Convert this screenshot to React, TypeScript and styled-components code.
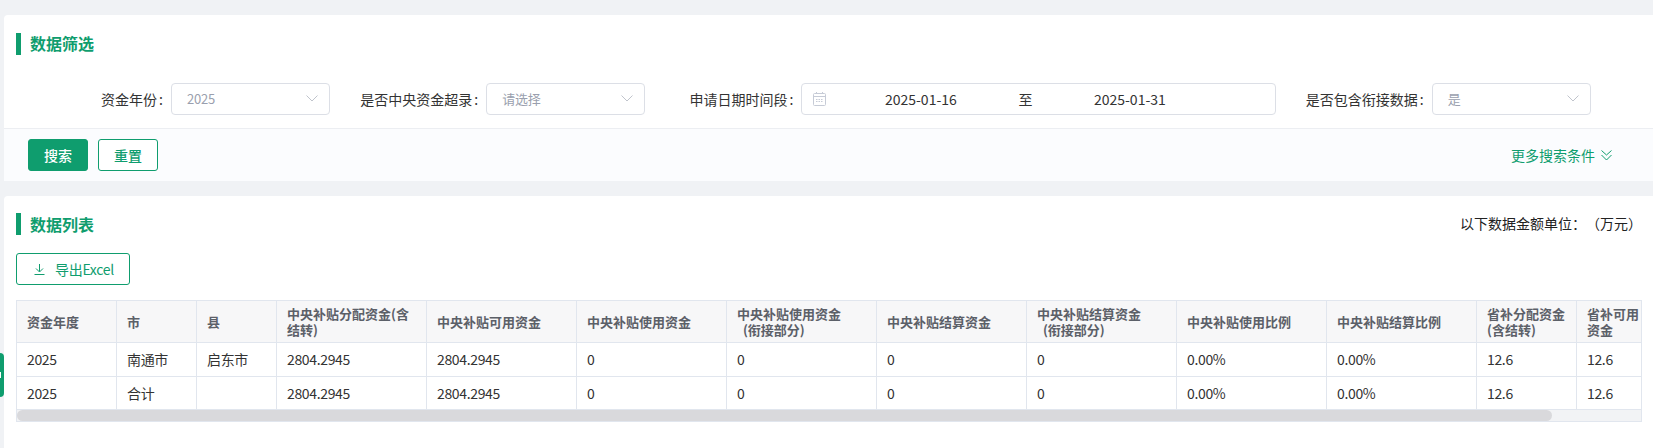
import React from 'react'
import styled, { createGlobalStyle } from 'styled-components'

const GREEN = '#0f9d6e'
const LINE = '#e1e6ee'

const GlobalStyle = createGlobalStyle`
  html, body {
    margin: 0;
    padding: 0;
    background: #f0f2f5;
    overflow: hidden;
  }
  * {
    box-sizing: border-box;
  }
  body {
    font-family: 'Noto Sans CJK SC', 'Noto Sans', sans-serif;
    font-size: 14px;
    color: #333;
  }
`

const Page = styled.div`
  position: relative;
  height: 448px;
  padding: 15px 0 0 4px;
  display: flex;
  flex-direction: column;
  gap: 15px;
  overflow: hidden;
`

const Card = styled.section<{ $grow?: boolean }>`
  background: #fff;
  border-radius: 4px 0 0 0;
  flex: ${(p) => (p.$grow ? 1 : 'none')};
`

const CardHead = styled.div`
  display: flex;
  align-items: center;
  justify-content: space-between;
  height: 22px;
  margin: 18px 11px 0 12px;
`

const ListHead = styled(CardHead)`
  margin-top: 17px;
`

const Title = styled.h2`
  margin: 0;
  padding-left: 9px;
  height: 22px;
  line-height: 21px;
  border-left: 5px solid ${GREEN};
  color: ${GREEN};
  font-size: 16px;
  font-weight: 700;
`

const ListTitle = styled(Title)`
  line-height: 23px;
`

const UnitNote = styled.div`
  padding-bottom: 2px;
  color: #222;
  font-size: 14px;
  line-height: 20px;
  text-spacing-trim: space-all;
`

const FilterGrid = styled.div`
  display: grid;
  grid-template-columns: repeat(5, 315.2px);
  margin-top: 28px;
  padding: 0 0 13px 11px;
`

const Field = styled.label<{ $span?: number }>`
  display: grid;
  grid-template-columns: 148px 1fr;
  column-gap: 8px;
  align-items: center;
  grid-column: span ${(p) => p.$span ?? 1};
`

const FieldLabel = styled.span`
  text-align: right;
  color: #333;
  font-size: 14px;
  line-height: 20px;
  padding-bottom: 1px;
  white-space: nowrap;
`

const Colon = styled.span`
  margin-left: 2px;
`

const SelectBox = styled.div`
  display: flex;
  align-items: center;
  justify-content: space-between;
  height: 32px;
  padding: 0 11px 1px 15px;
  background: #fff;
  border: 1px solid #dcdfe6;
  border-radius: 4px;
  color: #9a9fae;
  font-size: 13px;
  letter-spacing: -0.2px;
`

const DateBox = styled.div`
  display: flex;
  align-items: center;
  height: 32px;
  padding: 0 0 1px 11px;
  background: #fff;
  border: 1px solid #dcdfe6;
  border-radius: 4px;
  color: #333;
  font-size: 14px;
`

const DateValue = styled.span`
  width: 165px;
  text-align: center;
`

const DateSeparator = styled.span`
  width: 44px;
  text-align: center;
`

const CalendarSvg = styled.svg`
  flex: none;
  margin-right: 12px;
`

const ActionBar = styled.div`
  display: flex;
  align-items: center;
  justify-content: space-between;
  padding: 10px 41px 10px 24px;
  background: #fbfcfe;
  border-top: 1px solid #eceef2;
`

const ButtonRow = styled.div`
  display: flex;
  gap: 10px;
`

const Button = styled.button<{ $primary?: boolean }>`
  width: 60px;
  height: 32px;
  padding: 0;
  border: 1px solid ${GREEN};
  border-radius: 3px;
  background: ${(p) => (p.$primary ? GREEN : '#fff')};
  color: ${(p) => (p.$primary ? '#fff' : GREEN)};
  font-family: inherit;
  font-size: 14px;
  font-weight: 500;
`

const MoreToggle = styled.div`
  display: flex;
  align-items: center;
  gap: 6px;
  color: ${GREEN};
  font-size: 14px;
`

const ExportButton = styled.button`
  display: flex;
  align-items: center;
  gap: 10px;
  width: 114px;
  height: 32px;
  margin: 18px 0 15px 12px;
  padding: 0 0 0 17px;
  border: 1px solid ${GREEN};
  border-radius: 3px;
  background: #fff;
  color: ${GREEN};
  font-family: inherit;
  font-size: 14px;
  letter-spacing: -0.3px;
`

const TableScroll = styled.div`
  width: 1626px;
  margin-left: 12px;
  overflow: hidden;
  border: 1px solid ${LINE};
`

const Table = styled.table`
  width: 1640px;
  table-layout: fixed;
  border-collapse: separate;
  border-spacing: 0;
`

const HeadCell = styled.th`
  height: 42px;
  padding: 0 10px;
  background: #f7f7f8;
  border-right: 1px solid ${LINE};
  border-bottom: 1px solid ${LINE};
  color: #5c6068;
  font-size: 13px;
  font-weight: 700;
  line-height: 16px;
  text-align: left;
  overflow: hidden;
`

const BodyCell = styled.td`
  height: 33.5px;
  padding: 0 10px;
  border-right: 1px solid ${LINE};
  border-bottom: 1px solid ${LINE};
  color: #333;
  font-size: 14px;
  letter-spacing: -0.35px;
  white-space: nowrap;
  overflow: hidden;
`

const ScrollTrack = styled.div`
  height: 11px;
  background: #f2f3f5;
`

const ScrollThumb = styled.div`
  width: 1535px;
  height: 11px;
  background: #d9d9dc;
  border-radius: 6px;
`

const SideTab = styled.div`
  position: absolute;
  left: 0;
  top: 353px;
  width: 4px;
  height: 44px;
  background: ${GREEN};
  border-radius: 0 4px 4px 0;

  &::after {
    content: '';
    position: absolute;
    left: 0;
    top: 19px;
    width: 1px;
    height: 6px;
    background: #fff;
  }
`

const Chevron = () => (
  <svg width="12" height="7" viewBox="0 0 12 7" fill="none" stroke="#c0c4cc" strokeWidth="1">
    <path d="M0.5 0.5 6 6 11.5 0.5" />
  </svg>
)

const CalendarIcon = () => (
  <CalendarSvg width="13" height="14" viewBox="0 0 13 14" fill="none" stroke="#c6cbd6" strokeWidth="1">
    <rect x="0.5" y="1.5" width="12" height="12" rx="1" />
    <path d="M0.5 4.5H12.5M3.5 0V2M9.5 0V2" />
    <path d="M3 7.5H10M3 9.5H10" strokeDasharray="1.5 1" />
  </CalendarSvg>
)

const DoubleChevron = () => (
  <svg width="11" height="11" viewBox="0 0 11 11" fill="none" stroke={GREEN} strokeWidth="1">
    <path d="M0.5 0.5 5.5 5 10.5 0.5M0.5 5 5.5 10 10.5 5" />
  </svg>
)

const DownloadIcon = () => (
  <svg width="11" height="11" viewBox="0 0 11 11" fill="none" stroke={GREEN} strokeWidth="1">
    <path d="M5.5 0V7.5M2 4.5 5.5 8 9 4.5M0.5 10.5H10.5" />
  </svg>
)

const columns: { width: number; title: React.ReactNode }[] = [
  { width: 100, title: '资金年度' },
  { width: 80, title: '市' },
  { width: 80, title: '县' },
  { width: 150, title: '中央补贴分配资金(含结转)' },
  { width: 150, title: '中央补贴可用资金' },
  { width: 150, title: '中央补贴使用资金' },
  { width: 150, title: <>中央补贴使用资金<br />&nbsp;&nbsp;(衔接部分)</> },
  { width: 150, title: '中央补贴结算资金' },
  { width: 150, title: <>中央补贴结算资金<br />&nbsp;&nbsp;(衔接部分)</> },
  { width: 150, title: '中央补贴使用比例' },
  { width: 150, title: '中央补贴结算比例' },
  { width: 100, title: '省补分配资金(含结转)' },
  { width: 80, title: '省补可用资金' },
]

const rows = [
  ['2025', '南通市', '启东市', '2804.2945', '2804.2945', '0', '0', '0', '0', '0.00%', '0.00%', '12.6', '12.6'],
  ['2025', '合计', '', '2804.2945', '2804.2945', '0', '0', '0', '0', '0.00%', '0.00%', '12.6', '12.6'],
]

export default function App() {
  return (
    <Page>
      <GlobalStyle />
      <Card>
        <CardHead>
          <Title>数据筛选</Title>
        </CardHead>
        <FilterGrid>
          <Field>
            <FieldLabel>资金年份<Colon>:</Colon></FieldLabel>
            <SelectBox>
              2025
              <Chevron />
            </SelectBox>
          </Field>
          <Field>
            <FieldLabel>是否中央资金超录<Colon>:</Colon></FieldLabel>
            <SelectBox>
              请选择
              <Chevron />
            </SelectBox>
          </Field>
          <Field $span={2}>
            <FieldLabel>申请日期时间段<Colon>:</Colon></FieldLabel>
            <DateBox>
              <CalendarIcon />
              <DateValue>2025-01-16</DateValue>
              <DateSeparator>至</DateSeparator>
              <DateValue>2025-01-31</DateValue>
            </DateBox>
          </Field>
          <Field>
            <FieldLabel>是否包含衔接数据<Colon>:</Colon></FieldLabel>
            <SelectBox>
              是
              <Chevron />
            </SelectBox>
          </Field>
        </FilterGrid>
        <ActionBar>
          <ButtonRow>
            <Button $primary>搜索</Button>
            <Button>重置</Button>
          </ButtonRow>
          <MoreToggle>
            更多搜索条件
            <DoubleChevron />
          </MoreToggle>
        </ActionBar>
      </Card>

      <Card $grow>
        <ListHead>
          <ListTitle>数据列表</ListTitle>
          <UnitNote>以下数据金额单位：（万元）</UnitNote>
        </ListHead>
        <ExportButton>
          <DownloadIcon />
          导出Excel
        </ExportButton>
        <TableScroll>
          <Table>
            <colgroup>
              {columns.map((col, i) => (
                <col key={i} width={col.width} />
              ))}
            </colgroup>
            <thead>
              <tr>
                {columns.map((col, i) => (
                  <HeadCell key={i}>{col.title}</HeadCell>
                ))}
              </tr>
            </thead>
            <tbody>
              {rows.map((row, r) => (
                <tr key={r}>
                  {row.map((cell, c) => (
                    <BodyCell key={c}>{cell}</BodyCell>
                  ))}
                </tr>
              ))}
            </tbody>
          </Table>
          <ScrollTrack>
            <ScrollThumb />
          </ScrollTrack>
        </TableScroll>
      </Card>
      <SideTab />
    </Page>
  )
}
